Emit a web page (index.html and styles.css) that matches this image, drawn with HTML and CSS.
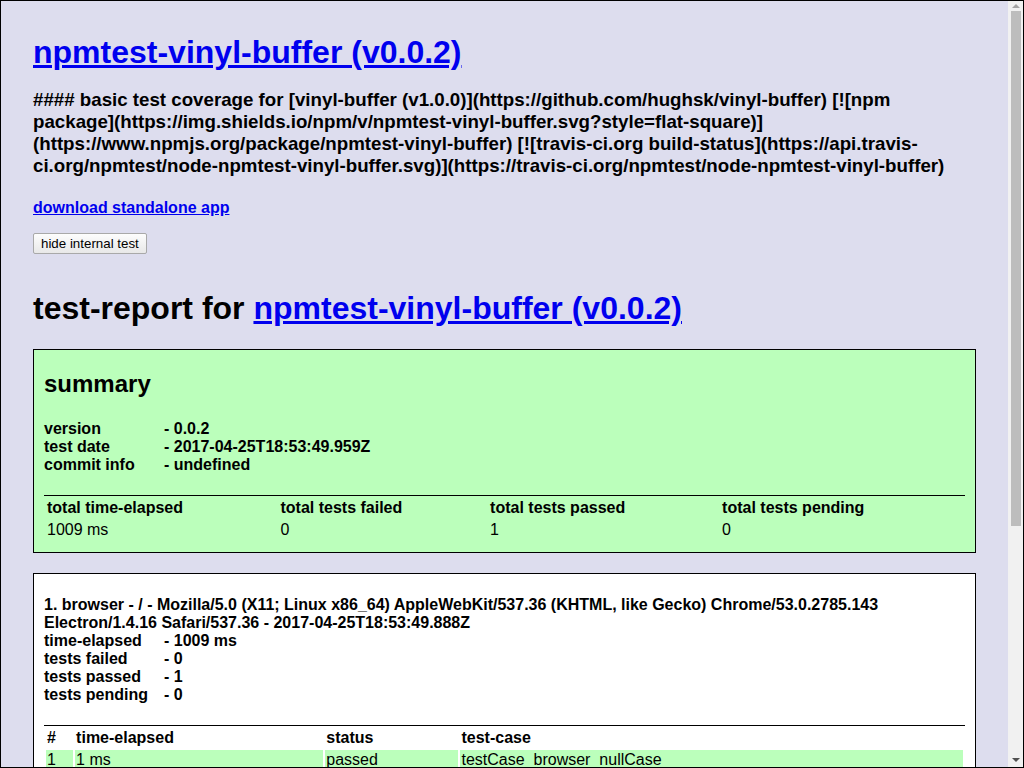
FILE: index.html
```html
<!DOCTYPE html>
<html lang="en">
<head>
<meta charset="utf-8">
<title>npmtest-vinyl-buffer (v0.0.2)</title>
<link rel="stylesheet" href="styles.css">
</head>
<body>
<div class="frame">
<div class="viewport">
<div class="page">
  <h1 class="title"><a href="#">npmtest-vinyl-buffer (v0.0.2)</a></h1>
  <h3>#### basic test coverage for [vinyl-buffer (v1.0.0)](https://github.com/hughsk/vinyl-buffer) [![npm package](https://img.shields.io/npm/v/npmtest-vinyl-buffer.svg?style=flat-square)](https://www.npmjs.org/package/npmtest-vinyl-buffer) [![travis-ci.org build-status](https://api.travis-ci.org/npmtest/node-npmtest-vinyl-buffer.svg)](https://travis-ci.org/npmtest/node-npmtest-vinyl-buffer)</h3>
  <h4 class="download"><a href="#">download standalone app</a></h4>
  <button class="toggle" type="button">hide internal test</button>

  <div class="testReportDiv">
    <h1 class="report-title">test-report for <a href="#">npmtest-vinyl-buffer (v0.0.2)</a></h1>

    <div class="platform summary">
      <h2>summary</h2>
      <h4 class="summary-info">
        <span>version</span>- 0.0.2<br>
        <span>test date</span>- 2017-04-25T18:53:49.959Z<br>
        <span>commit info</span>- undefined<br>
      </h4>
      <table>
        <thead>
          <tr><th>total time-elapsed</th><th>total tests failed</th><th>total tests passed</th><th>total tests pending</th></tr>
        </thead>
        <tbody>
          <tr><td>1009 ms</td><td>0</td><td>1</td><td>0</td></tr>
        </tbody>
      </table>
    </div>

    <div class="platform">
      <h4>
        1. browser - / - Mozilla/5.0 (X11; Linux x86_64) AppleWebKit/537.36 (KHTML, like Gecko) Chrome/53.0.2785.143 Electron/1.4.16 Safari/537.36 - 2017-04-25T18:53:49.888Z<br>
        <span>time-elapsed</span>- 1009 ms<br>
        <span>tests failed</span>- 0<br>
        <span>tests passed</span>- 1<br>
        <span>tests pending</span>- 0<br>
      </h4>
      <table>
        <thead>
          <tr><th>#</th><th>time-elapsed</th><th>status</th><th>test-case</th></tr>
        </thead>
        <tbody>
          <tr class="testPassed"><td>1</td><td>1 ms</td><td>passed</td><td>testCase_browser_nullCase</td></tr>
        </tbody>
      </table>
    </div>

    <div class="platform">
      <h4>
        2. node - linux - v7.9.0 - 2017-04-25T18:53:43.171Z<br>
        <span>time-elapsed</span>- 6788 ms<br>
        <span>tests failed</span>- 0<br>
        <span>tests passed</span>- 6<br>
        <span>tests pending</span>- 0<br>
      </h4>
      <table>
        <thead>
          <tr><th>#</th><th>time-elapsed</th><th>status</th><th>test-case</th></tr>
        </thead>
        <tbody>
          <tr class="testPassed"><td>1</td><td>6581 ms</td><td>passed</td><td>testCase_buildApidoc_default</td></tr>
          <tr><td>2</td><td>51 ms</td><td>passed</td><td>testCase_buildApp_default</td></tr>
          <tr class="testPassed"><td>3</td><td>1 ms</td><td>passed</td><td>testCase_webpage_default</td></tr>
        </tbody>
      </table>
    </div>

    <div class="footer">[ this app was created with <a href="#">utility2</a> ]</div>
  </div>
</div>
</div>
<div class="scrollbar" aria-hidden="true">
  <div class="sb-button"><i class="arrow-up"></i></div>
  <div class="sb-track">
    <div class="sb-thumb"></div>
  </div>
  <div class="sb-button sb-bottom"><i class="arrow-down"></i></div>
</div>
</div>
</body>
</html>
```
FILE: styles.css
```css
html, body {
  margin: 0;
  height: 100%;
  overflow: hidden;
}

.frame {
  box-sizing: border-box;
  height: 100vh;
  border: 1px solid #000;
  display: flex;
  background: #dde;
  font-family: "Liberation Sans", Arial, Helvetica, sans-serif;
  color: #000;
}

.viewport {
  flex: 1;
  overflow: hidden;
}

.page {
  margin: 0 32px;
  padding: 12px 0 40px;
}

/* fake classic scrollbar */
.scrollbar {
  flex: none;
  width: 15px;
  background: #f1f1f1;
  display: flex;
  flex-direction: column;
}

.sb-button {
  flex: none;
  height: 10px;
  display: flex;
  justify-content: center;
  align-items: center;
}

.sb-bottom {
  height: 14px;
}

.arrow-up {
  width: 0;
  height: 0;
  border-left: 4px solid transparent;
  border-right: 4px solid transparent;
  border-bottom: 4px solid #a3a3a3;
  margin-left: 1px;
}

.arrow-down {
  width: 0;
  height: 0;
  border-left: 4px solid transparent;
  border-right: 4px solid transparent;
  border-top: 4px solid #505050;
  margin-left: 1px;
}

.sb-track {
  flex: 1;
  padding: 0 2px 0 3px;
}

.sb-thumb {
  height: 515px;
  background: #bdbdbd;
}

a {
  color: #00e;
}

h1 {
  font-size: 32px;
  margin: 21px 0;
}

.title {
  margin-bottom: 17px;
}

h3 {
  font-size: 18.72px;
  margin: 17.72px 0 18.72px;
}

.download {
  font-size: 16px;
  margin: 22.28px 0 16px;
}

.toggle {
  font-family: "Liberation Sans", Arial, sans-serif;
  font-size: 13.33px;
  padding: 1px 7px;
  height: 21px;
  color: #000;
  background: linear-gradient(#fdfdfd, #e8e8e8);
  border: 1px solid #a9a9a9;
  border-radius: 2px;
}

.testReportDiv span {
  display: inline-block;
  width: 120px;
}

.report-title {
  margin-top: 36px;
  margin-bottom: 22px;
}

.platform {
  background: #fff;
  border: 1px solid #000;
  font-weight: bold;
  margin-top: 20px;
  padding: 0 10px 10px 10px;
  text-align: left;
}

.platform h2 {
  font-size: 24px;
  margin: 19.92px 0;
}

.platform h4 {
  font-size: 16px;
  margin: 21.28px 0;
}

.platform .summary-info {
  margin-top: 22.28px;
  margin-bottom: 21.28px;
}

.summary {
  background: #bfb;
}

table {
  border-top: 1px solid #000;
  text-align: left;
  width: 100%;
  font-size: 16px;
}

td {
  font-weight: normal;
}

tr.testPassed {
  background: #bfb;
}

.footer {
  text-align: center;
  margin: 20px 0;
  font-weight: bold;
}
```
